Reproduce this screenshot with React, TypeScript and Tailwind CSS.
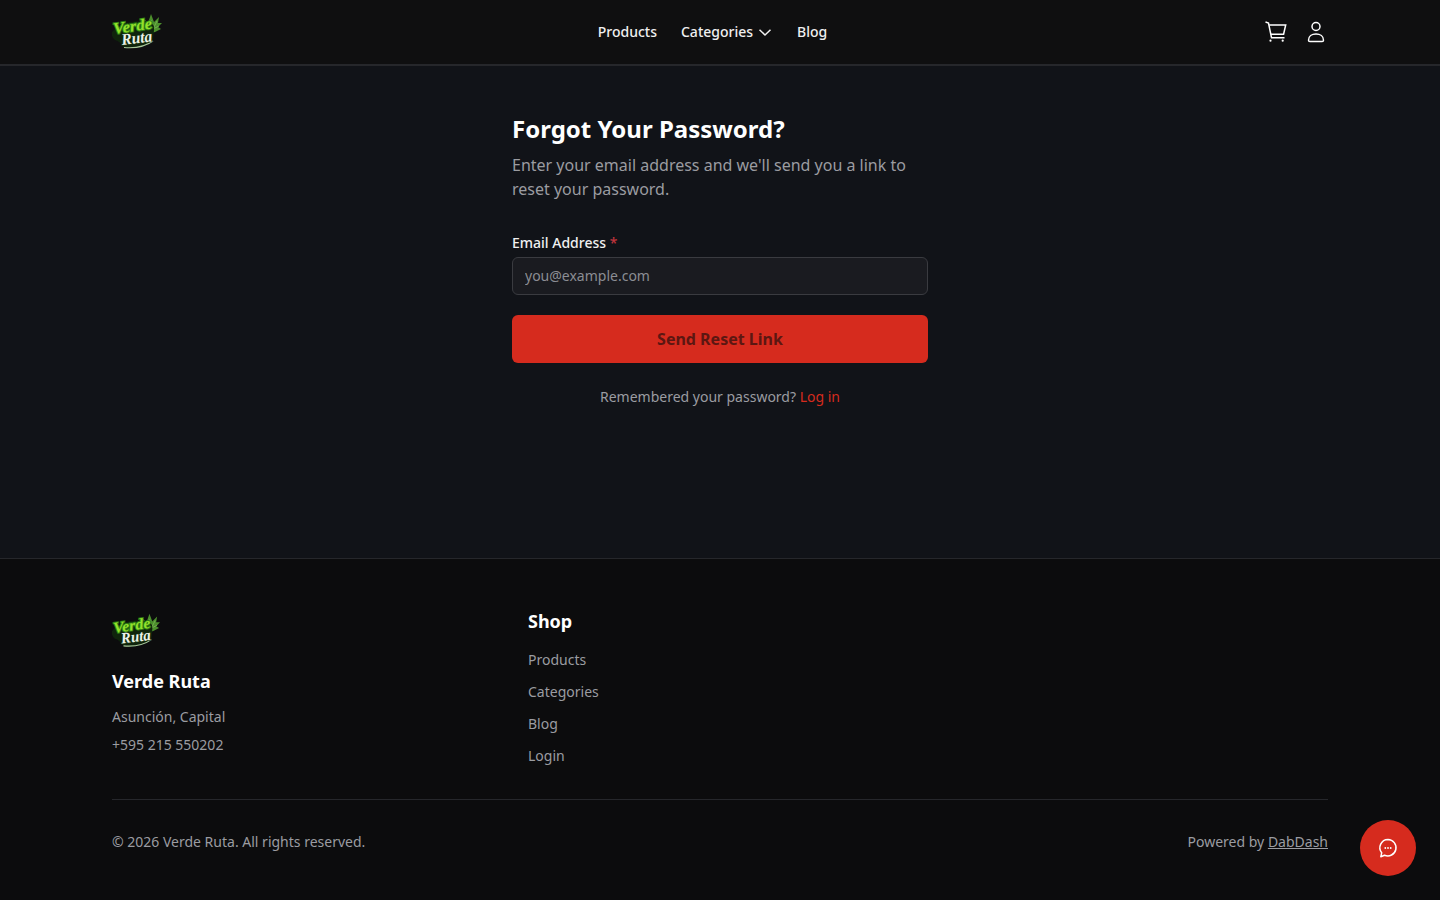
const FONT = "font-['Noto_Sans',sans-serif]";

function Logo({ className }: { className?: string }) {
  return (
    <svg viewBox="0 0 50 36" className={className}>
      {/* leaf */}
      <path
        d="M31 12 L32 5 L36 9 L39 0 L42 8 L47 3 L46 9 L50 9 L46 13 L49 15 L43 18 L36 20 Z"
        fill="#4c8f2c"
      />
      <path d="M39 6 L41 15 M45 7 L41 15 M47 12 L41 15" stroke="#8cc46a" strokeWidth="0.6" fill="none" />
      {/* dark swoosh behind the name */}
      <path d="M0 18 Q10 6 33 7 Q43 8 42 16 L41 27 Q28 35 12 34 Q8 27 3 26 Q-1 23 0 18 Z" fill="#0f240c" />
      <path d="M12 33.5 Q30 35 41 27" fill="none" stroke="#a9c99b" strokeWidth="1.1" />
      <text
        x="2"
        y="20"
        fontFamily="'Liberation Serif', serif"
        fontStyle="italic"
        fontWeight="700"
        fontSize="16"
        fill="#93e02c"
        stroke="#2f7d14"
        strokeWidth="2"
        paintOrder="stroke"
        textLength="39"
        lengthAdjust="spacingAndGlyphs"
        transform="rotate(-8 2 20)"
      >
        Verde
      </text>
      <text
        x="10"
        y="31"
        fontFamily="'Liberation Serif', serif"
        fontStyle="italic"
        fontWeight="700"
        fontSize="16"
        fill="#edf2ea"
        stroke="#16340f"
        strokeWidth="1.4"
        paintOrder="stroke"
        textLength="31"
        lengthAdjust="spacingAndGlyphs"
        transform="rotate(-7 10 31)"
      >
        Ruta
      </text>
    </svg>
  );
}

function CartIcon({ className }: { className?: string }) {
  return (
    <svg viewBox="0 0 24 24" fill="none" stroke="currentColor" strokeWidth="1.5" className={className}>
      <path d="M1.5 2 L4.5 3 L7.5 17.7 H20.5" />
      <path d="M5.2 5 H21.7 L19.6 14.2 H7" />
      <circle cx="6.5" cy="20.7" r="1.1" fill="currentColor" stroke="none" />
      <circle cx="18.7" cy="20.7" r="1.1" fill="currentColor" stroke="none" />
    </svg>
  );
}

function UserIcon({ className }: { className?: string }) {
  return (
    <svg viewBox="0 0 24 24" fill="none" stroke="currentColor" strokeWidth="1.5" className={className}>
      <circle cx="12" cy="6.5" r="4" />
      <path d="M4.5 20.2c0-3.9 3.4-6.2 7.5-6.2s7.5 2.3 7.5 6.2c0 .8-.6 1.3-1.4 1.3H5.9c-.8 0-1.4-.5-1.4-1.3Z" />
    </svg>
  );
}

function ChatIcon({ className }: { className?: string }) {
  return (
    <svg viewBox="0 0 24 24" fill="none" className={className}>
      <path
        d="M12 3.5a8.2 8.2 0 1 1-3.5 15.7L4.8 20.8l.9-4A8.2 8.2 0 0 1 12 3.5Z"
        stroke="currentColor"
        strokeWidth="1.5"
        strokeLinejoin="round"
      />
      <circle cx="9.3" cy="12" r="0.9" fill="currentColor" />
      <circle cx="12" cy="12" r="0.9" fill="currentColor" />
      <circle cx="14.7" cy="12" r="0.9" fill="currentColor" />
    </svg>
  );
}

function Header() {
  return (
    <header className="h-[66px] border-b-2 border-[#26272b] bg-[#0f0f10]">
      <div className="mx-auto flex h-16 max-w-7xl items-center justify-between px-8">
        <Logo className="h-9 w-[50px]" />
        <nav className="ml-[-1px] flex items-center gap-6 text-sm font-medium text-[#f0f0f0]">
          <a>Products</a>
          <a className="flex items-center gap-1">
            Categories
            <svg viewBox="0 0 16 16" fill="none" stroke="currentColor" strokeWidth="1.5" className="h-4 w-4">
              <path d="M2.5 5.7 L8 11 L13.5 5.7" />
            </svg>
          </a>
          <a>Blog</a>
        </nav>
        <div className="flex items-center gap-4 text-white">
          <CartIcon className="h-6 w-6" />
          <UserIcon className="h-6 w-6" />
        </div>
      </div>
    </header>
  );
}

function ForgotForm() {
  return (
    <main className="h-[492px] bg-[#111318] pt-[47px]">
      <div className="mx-auto w-[416px]">
        <h1 className="text-2xl font-bold text-white">Forgot Your Password?</h1>
        <p className="mt-2 text-base text-[#9b9ca1]">
          Enter your email address and we'll send you a link to reset your password.
        </p>
        <form className="mt-8">
          <label className="mb-1 block text-sm font-medium text-[#f0f0f0]">
            Email Address <span className="text-[#c0343c]">*</span>
          </label>
          <input
            placeholder="you@example.com"
            className="h-[38px] w-full rounded-md border border-[#3a3b40] bg-[#1a1b20] px-3 pb-0.5 text-sm text-white outline-none placeholder:text-[#8b8d93]"
          />
          <button
            type="button"
            className="mt-5 h-12 w-full rounded-md bg-[#d62b1e] text-base font-bold text-[#5c1712]"
          >
            Send Reset Link
          </button>
        </form>
        <p className="mt-6 text-center text-sm text-[#9b9ca1]">
          Remembered your password? <a className="text-[#d62b1e]">Log in</a>
        </p>
      </div>
    </main>
  );
}

function Footer() {
  return (
    <footer className="h-[342px] border-t border-[#26272b] bg-[#0c0c0d]">
      <div className="mx-auto max-w-7xl px-8 pt-12">
        <div className="grid grid-cols-3 gap-8">
          <div>
            <Logo className="h-12 w-12" />
            <h3 className="mt-3 text-lg font-bold text-white">Verde Ruta</h3>
            <p className="mt-2 text-sm leading-7 text-[#9b9ca1]">Asunción, Capital</p>
            <p className="text-sm leading-7 text-[#9b9ca1]">+595 215 550202</p>
          </div>
          <div>
            <h3 className="text-lg font-bold text-white">Shop</h3>
            <ul className="mt-[9px] text-sm text-[#9b9ca1]">
              <li className="py-1.5">Products</li>
              <li className="py-1.5">Categories</li>
              <li className="py-1.5">Blog</li>
              <li className="py-1.5">Login</li>
            </ul>
          </div>
          <div />
        </div>
        <div className="mt-[27px] flex items-center justify-between border-t border-[#26272b] pt-8 text-sm text-[#9b9ca1]">
          <p>© 2026 Verde Ruta. All rights reserved.</p>
          <p>
            Powered by <a className="underline">DabDash</a>
          </p>
        </div>
      </div>
    </footer>
  );
}

export default function App() {
  return (
    <div className={`relative min-h-screen antialiased ${FONT}`}>
      <Header />
      <ForgotForm />
      <Footer />
      {/* chat bubble */}
      <button className="absolute right-6 bottom-6 flex h-14 w-14 items-center justify-center rounded-full bg-[#d62b1e] text-white">
        <ChatIcon className="h-6 w-6" />
      </button>
    </div>
  );
}
